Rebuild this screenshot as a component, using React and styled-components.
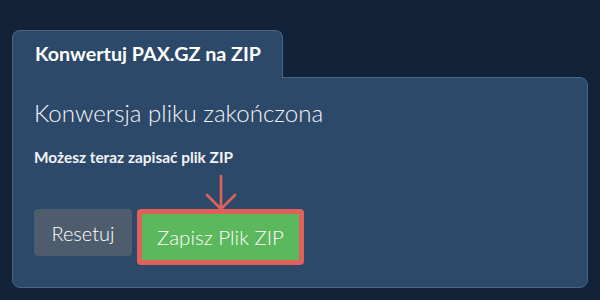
import styled, { createGlobalStyle } from 'styled-components'

const Global = createGlobalStyle`
    html, body {
        margin: 0;
        padding: 0;
        background-color: #112239;
        font-family: Lato, "Open Sans", sans-serif;
        color: #ffffff;
    }
`

/* WRAPPERS */
const Page = styled.div`
    width: 600px;
    height: 300px;
    box-sizing: border-box;
    padding: 30px 12px 0 12px;
    display: flex;
    flex-direction: column;
`
const TabBar = styled.div`
    display: flex;
    position: relative;
    z-index: 1;
    margin-bottom: -1px;
`
const Tab = styled.div`
    width: 271px;
    box-sizing: border-box;
    padding: 13px 0 14px 22px;
    white-space: nowrap;
    background-color: #2d4969;
    border: 1px solid #4b6684;
    border-bottom: none;
    border-radius: 8px 8px 0 0;
    font-size: 19.7px;
    font-weight: 700;
    line-height: 20px;
`
const Panel = styled.div`
    height: 211px;
    box-sizing: border-box;
    background-color: #2d4969;
    border: 1px solid #4b6684;
    border-radius: 0 8px 8px 8px;
    padding: 20px 21px;
`
const Heading = styled.h2`
    margin: 0;
    font-size: 24.1px;
    font-weight: 300;
    line-height: 30px;
    color: #f1f4f8;
`
const Note = styled.p`
    margin: 19px 0 0 0;
    font-size: 15.4px;
    font-weight: 700;
    line-height: 20px;
    color: #f1f4f8;
`
const Actions = styled.div`
    display: flex;
    align-items: flex-start;
    gap: 5px;
    margin-top: 42px;
`
const Button = styled.button`
    position: relative;
    font-family: inherit;
    font-weight: 300;
    color: #ffffff;
    border-radius: 4px;
    cursor: pointer;
    box-sizing: border-box;
    background-color: ${p => p.$primary ? '#5cb85c' : '#4e5d6e'};
    border: ${p => p.$primary ? '5px solid #e0605a' : 'none'};
    font-size: ${p => p.$primary ? '20.5px' : '20px'};
    width: ${p => p.$primary ? '167px' : '98px'};
    height: ${p => p.$primary ? '56px' : '47px'};
    padding: 0;
`
const Arrow = styled.svg`
    position: absolute;
    left: 50%;
    bottom: 100%;
    margin-left: -16px;
    margin-bottom: 3px;
    overflow: visible;
`

const App = () => {
    return (
        <>
            <Global />
            <Page>
                <TabBar>
                    <Tab>Konwertuj PAX.GZ na ZIP</Tab>
                </TabBar>
                <Panel>
                    <Heading>Konwersja pliku zakończona</Heading>
                    <Note>Możesz teraz zapisać plik ZIP</Note>
                    <Actions>
                        <Button>Resetuj</Button>
                        <Button $primary>
                            <Arrow width="32" height="36" viewBox="0 0 32 36">
                                <path d="M16 1 V34 M2 20 L16 34 L30 20" fill="none" stroke="#e0605a" strokeWidth="2.6" strokeLinecap="round" strokeLinejoin="round" />
                            </Arrow>
                            Zapisz Plik ZIP
                        </Button>
                    </Actions>
                </Panel>
            </Page>
        </>
    )
}

export default App
